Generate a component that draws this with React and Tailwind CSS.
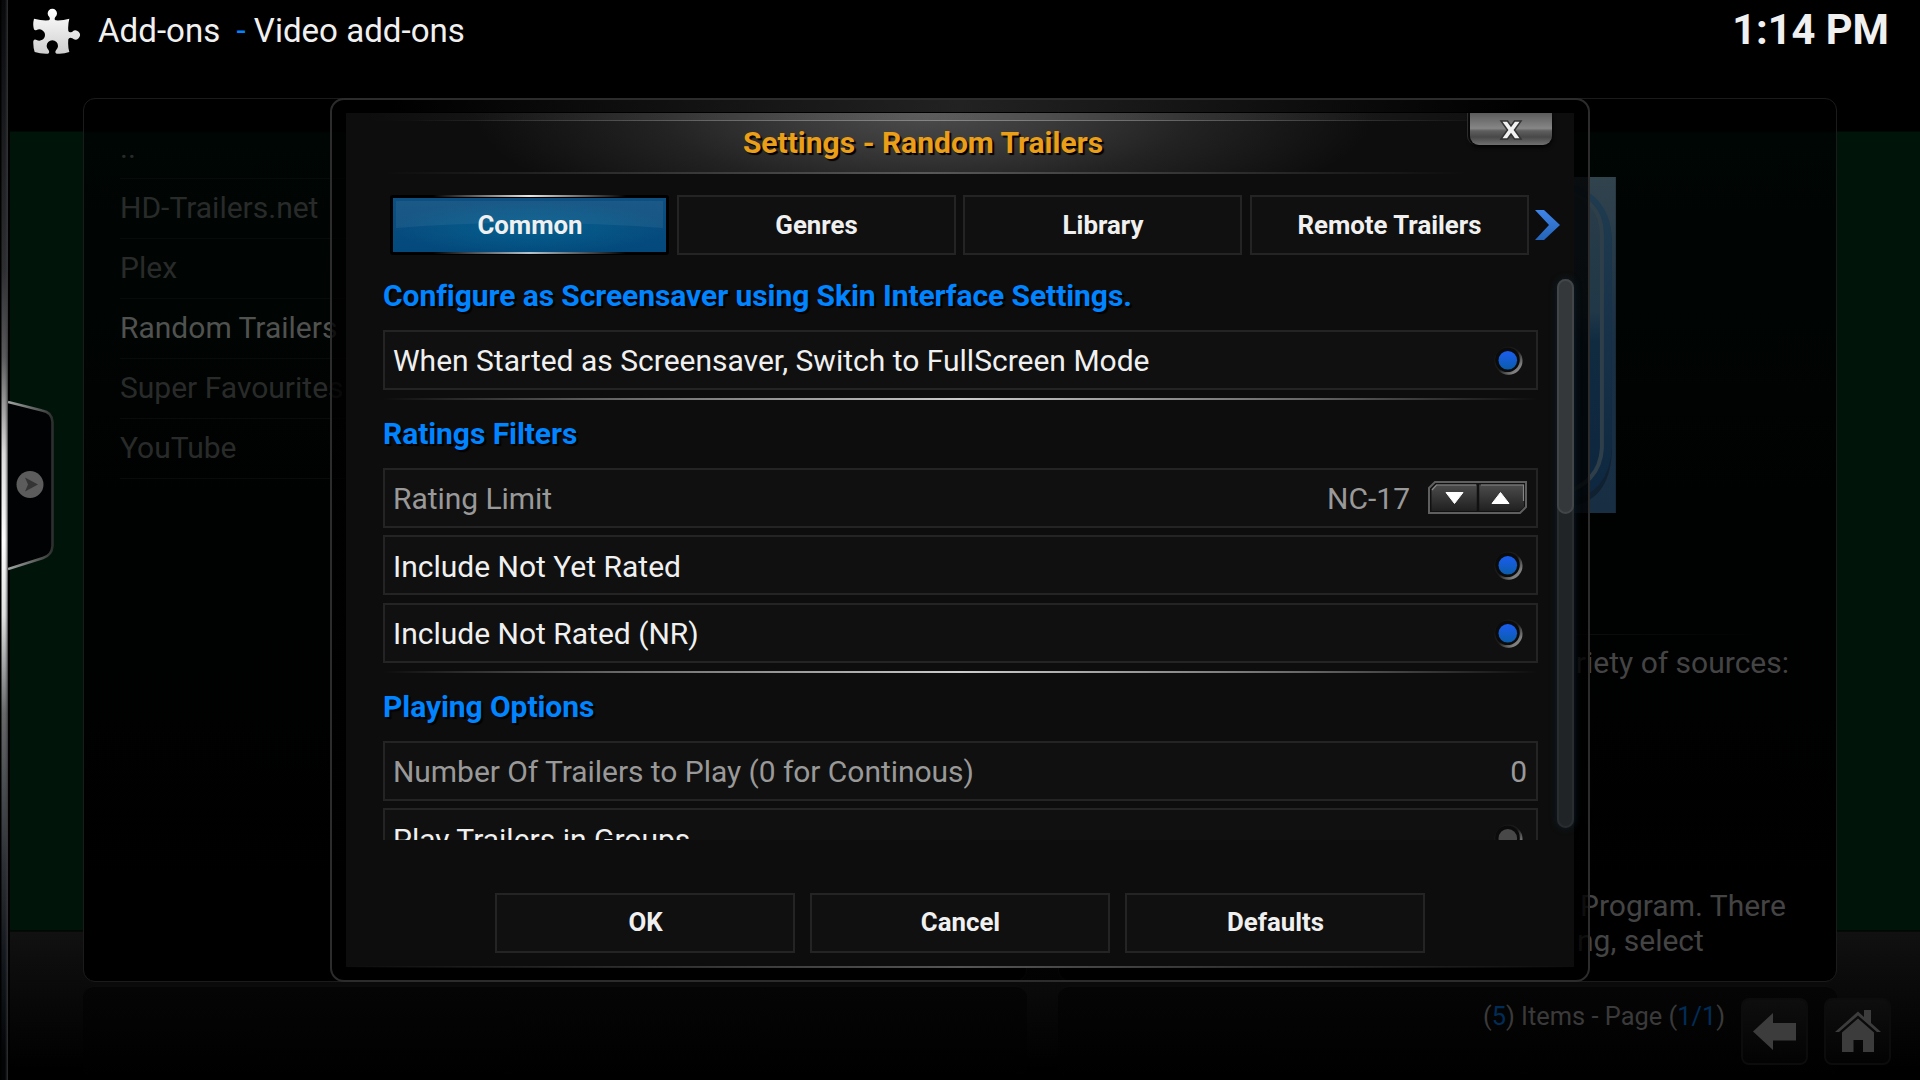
import React from "react";

const addons = ["..", "HD-Trailers.net", "Plex", "Random Trailers", "Super Favourites", "YouTube"];

function PuzzleIcon() {
  return (
    <svg className="h-[48px] w-[50px]" viewBox="96 20 150 144">
      <defs>
        <linearGradient id="puzzle" x1="0" y1="0" x2="0" y2="1">
          <stop offset="0" stopColor="#ffffff" />
          <stop offset="1" stopColor="#cfcfcf" />
        </linearGradient>
      </defs>
      <path
        fill="url(#puzzle)"
        d="M102 55Q128 62 146 60Q152 58 148 50A14 14 0 1 1 166 50Q161 58 168 60Q188 61 208 55Q203 75 205 92Q208 99 217 94A13.500 13.500 0 1 1 217 114Q208 109 205 117Q203 140 208 155Q190 162 170 160Q163 157 168 150A17 17 0 1 0 146 150Q150 157 144 160Q122 161 104 155Q99 140 100 122Q103 115 110 119A17 17 0 1 0 110 89Q102 92 101 84Q98 70 102 55Z"
      />
    </svg>
  );
}

function SideHandle() {
  return (
    <div className="absolute left-0 top-0 flex h-[1080px] items-start">
      <div className="h-full w-[8px] bg-[linear-gradient(90deg,#000_0px,#000_1px,transparent_2px,transparent_5px,rgba(60,60,60,0.5)_7px,#333_8px),linear-gradient(180deg,#08090b_0%,#1b1d21_14%,#2c2e31_25%,#5a5a5c_33%,#dcdcdc_42%,#ffffff_50%,#e0e0e0_57%,#66686a_66%,#2c3035_80%,#15191e_88%,#020406_98%)]" />
      <div className="h-full w-[2px] bg-black" />
      <svg className="-ml-[2px] mt-[398px] h-[176px] w-[50px]" viewBox="8 398 50 176">
        <defs>
          <linearGradient id="edge" x1="0" y1="0" x2="1" y2="0">
            <stop offset="0" stopColor="#a0a4a2" />
            <stop offset="0.8" stopColor="#4a4c4b" />
            <stop offset="1" stopColor="#2e302f" />
          </linearGradient>
        </defs>
        <path d="M8 402L42 410.500Q52 412 52.500 422V546Q52 555 43 558L8 569Z" fill="#010203" />
        <path d="M8 402L42 410.500Q52 412 52.500 422V546Q52 555 43 558L8 569" fill="none" stroke="url(#edge)" strokeWidth="2.500" />
        <circle cx="30" cy="484.500" r="13.500" fill="#5c5c5c" />
        <path d="M25 477.500L38 484.500L25 491.500L28 484.500Z" fill="#343434" />
      </svg>
    </div>
  );
}

function Radio({ on }) {
  return (
    <svg className="mr-[3px] h-[32px] w-[32px]" viewBox="0 0 32 32">
      <defs>
        <linearGradient id="dotOn" x1="0" y1="0" x2="0" y2="1">
          <stop offset="0" stopColor="#1b5df0" />
          <stop offset="1" stopColor="#0a5caa" />
        </linearGradient>
        <linearGradient id="ring" x1="0.1" y1="0.1" x2="0.9" y2="0.9">
          <stop offset="0" stopColor="#1a1a1a" />
          <stop offset="0.5" stopColor="#1c1c1c" />
          <stop offset="0.85" stopColor="#7c7c7c" />
          <stop offset="1" stopColor="#8a8a8a" />
        </linearGradient>
      </defs>
      <circle cx="16.500" cy="16.800" r="14" fill="url(#ring)" />
      <circle cx="15.500" cy="15.800" r="12.300" fill="#0b0b0b" />
      <circle cx="15.800" cy="16.300" r="9.300" fill={on ? "url(#dotOn)" : "#484848"} />
    </svg>
  );
}

function Spinner() {
  return (
    <svg className="h-[33px] w-[99px]" viewBox="0 0 99 33">
      <defs>
        <linearGradient id="spin" x1="0" y1="0" x2="0" y2="1">
          <stop offset="0" stopColor="#4c4c4c" />
          <stop offset="1" stopColor="#202020" />
        </linearGradient>
      </defs>
      <path d="M7 1H98V26L92 32H1V7Z" fill="#111" stroke="#5f5f5f" strokeWidth="2" />
      <path d="M8 3.500H96V26L91 30H3.500V8Z" fill="url(#spin)" />
      <path d="M4 9L8.500 4H48M53 4H95.500V20" fill="none" stroke="#858585" strokeWidth="1.200" />
      <path d="M50 2V31" stroke="#111" strokeWidth="2.500" />
      <path d="M18 11.500H35L26.500 22.500Z" fill="#fff" stroke="#fff" strokeLinejoin="round" />
      <path d="M64 22.500H81L72.500 11.500Z" fill="#fff" stroke="#fff" strokeLinejoin="round" />
    </svg>
  );
}

function Row({ label, dim, children }) {
  return (
    <div className="mb-[7.5px] flex h-[60px] shrink-0 items-center justify-between border-2 border-[#242424] bg-[#101010] pl-[8px] pr-[9px]">
      <span className={dim ? "pt-[2px] tracking-[-0.05px] text-[#999999]" : "pt-[2px] text-[#f0f0f0]"}>{label}</span>
      {children}
    </div>
  );
}

function Heading({ children }) {
  return (
    <h2 className="flex h-[67.5px] shrink-0 items-center text-[30px] font-bold tracking-[-0.07px] text-[#0084ff] [text-shadow:2px_2px_1px_#000]">
      {children}
    </h2>
  );
}

function Separator() {
  return (
    <div className="mt-[1px] h-[2px] shrink-0 bg-[linear-gradient(90deg,transparent,#666_20%,#ccc_50%,#666_80%,transparent)]" />
  );
}

function Tab({ active, children }) {
  if (active) {
    return (
      <div className="relative flex h-[60px] w-[279px] items-center justify-center rounded-[3px] border-3 border-black bg-[linear-gradient(180deg,#0d4f80,#03497c)]">
        <svg className="absolute inset-0 h-[54px] w-[273px]" viewBox="0 0 273 54">
          <defs>
            <radialGradient id="tabGlow" cx="0.5" cy="0.55" r="0.5">
              <stop offset="0" stopColor="#046290" stopOpacity="0.9" />
              <stop offset="1" stopColor="#046290" stopOpacity="0" />
            </radialGradient>
          </defs>
          <rect width="273" height="54" fill="url(#tabGlow)" />
          <path d="M3 3H270V30Q136 20 3 30Z" fill="#fff" fillOpacity="0.06" />
        </svg>
        <div className="absolute -top-[3px] left-[40px] right-[40px] h-[2px] bg-[linear-gradient(90deg,transparent,#e8e8e8_50%,transparent)]" />
        <div className="absolute -bottom-[2px] left-[40px] right-[40px] h-[2px] bg-[linear-gradient(90deg,transparent,#b8c4cc_50%,transparent)]" />
        <span className="relative pl-px">{children}</span>
      </div>
    );
  }
  return (
    <div className="flex h-[60px] w-[279px] items-center justify-center border-2 border-[#242424] bg-[#101010] pl-px">{children}</div>
  );
}

function Dialog() {
  return (
    <div className="absolute left-[330px] top-[98px] h-[884px] w-[1260px] rounded-[14px] border-2 border-[#2c2c2c] bg-[linear-gradient(rgba(0,0,0,0.8),rgba(0,0,0,0.8))] p-[14px] pb-[13px] pt-[13px]">
      <div className="absolute left-[60px] right-[60px] top-0 h-[12px] bg-[linear-gradient(90deg,transparent,#222_50%,transparent)]" />
      <div className="relative flex h-full flex-col bg-[#0d0d0d] pl-[37px]">
        <div className="absolute left-0 right-0 top-0 h-[59px] bg-[radial-gradient(ellipse_450px_125px_at_578px_0px,#4c4c4c,#3a3a3a_28%,#222_60%,transparent)]" />
        <div className="absolute left-[20px] right-[50px] top-0 h-[8px] bg-[linear-gradient(90deg,transparent,rgba(130,130,130,0.32)_50%,transparent)]" />
        <div className="absolute left-[60px] right-[90px] top-[7px] h-[1px] bg-[linear-gradient(90deg,transparent,#858585_50%,transparent)]" />
        <div className="absolute left-[37px] right-[106px] top-[59px] h-[2px] bg-[linear-gradient(90deg,transparent,#585858_50%,transparent)]" />
        <div className="absolute -bottom-[1px] left-0 right-0 h-[2px] bg-[linear-gradient(90deg,transparent,#555_50%,transparent)]" />

        <h1 className="relative flex h-[60px] w-[1080px] items-center justify-center pb-[2px] text-[30px] font-bold text-[#eb9e17] [text-shadow:2px_2px_1px_#000]">
          Settings - Random Trailers
        </h1>
        <button className="absolute right-[22px] top-0 flex h-[32px] w-[82px] items-center justify-center rounded-b-[9px] bg-[linear-gradient(180deg,#5c5c5c_0%,#868686_48%,#5e5e5e_56%,#484848_75%,#707070_100%)] pt-px shadow-[0_2px_4px_#000,-2px_0_0_#0d0d0d,-3px_0_0_#333]">
          <svg className="h-[22px] w-[24px]" viewBox="0 0 24 22">
            <path d="M2 2H8.500L12 7L15.500 2H22L15.500 11L22 20H15.500L12 15L8.500 20H2L8.500 11Z" fill="#f2f2f2" stroke="#333" strokeWidth="1.500" />
          </svg>
        </button>

        <div className="mt-[22px] flex items-center gap-[7.5px] pl-[7px] text-[25.8px] font-bold text-[#f0f0f0]">
          <Tab active>Common</Tab>
          <Tab>Genres</Tab>
          <Tab>Library</Tab>
          <Tab>Remote Trailers</Tab>
          <svg className="-ml-[1px] h-[30px] w-[25px]" viewBox="0 0 25 30">
            <defs>
              <linearGradient id="chev" x1="0" y1="0" x2="0" y2="1">
                <stop offset="0" stopColor="#3f84e8" />
                <stop offset="1" stopColor="#2565b8" />
              </linearGradient>
            </defs>
            <path d="M0 0H9L25 15L9 30H0L14 15Z" fill="url(#chev)" />
          </svg>
        </div>

        <div className="mt-[7px] flex h-[578px]">
          <div className="flex w-[1155px] flex-col overflow-hidden text-[30px]">
            <Heading>Configure as Screensaver using Skin Interface Settings.</Heading>
            <Row label="When Started as Screensaver, Switch to FullScreen Mode"><Radio on /></Row>
            <Separator />
            <Heading>Ratings Filters</Heading>
            <Row label="Rating Limit" dim>
              <div className="flex items-center gap-[18px] text-[#999999]">
                <span className="pt-[2px]">NC-17</span>
                <Spinner />
              </div>
            </Row>
            <Row label="Include Not Yet Rated"><Radio on /></Row>
            <Row label="Include Not Rated (NR)"><Radio on /></Row>
            <Separator />
            <Heading>Playing Options</Heading>
            <Row label="Number Of Trailers to Play (0 for Continous)" dim>
              <span className="pt-[2px] text-[#999999]">0</span>
            </Row>
            <Row label="Play Trailers in Groups"><Radio /></Row>
          </div>
          <div className="ml-[19px] mt-[17px] h-[549px] w-[17px] rounded-full border-2 border-[#292d2f] bg-[#202426] shadow-[0_0_7px_#10202c]">
            <div className="-ml-[2px] -mt-[2px] h-[235px] w-[17px] rounded-full border-2 border-[#434648] bg-[#35383a]" />
          </div>
        </div>

        <div className="-ml-[37px] mt-[53px] flex justify-center gap-[15px] text-[25.8px] font-bold text-[#f0f0f0]">
          {["OK", "Cancel", "Defaults"].map((name) => (
            <button key={name} className="flex h-[60px] w-[300px] items-center justify-center border-2 border-[#242424] bg-[#101010] pb-[2px] pl-px">
              {name}
            </button>
          ))}
        </div>
      </div>
    </div>
  );
}

export default function App() {
  return (
    <div className="relative flex h-[1080px] w-[1920px] flex-col overflow-hidden bg-[linear-gradient(180deg,#000_0px,#000_131px,#00140a_132px,#00140a_930px,#000_931px,#111_932px,#0d0d0d_960px,#000_1070px)] font-['Roboto',sans-serif]">
      <header className="flex h-[98px] items-start justify-between pl-[32px] pr-[31px] text-[#f0f0f0]">
        <div className="flex items-center pt-[7px]">
          <PuzzleIcon />
          <span className="ml-[16px] whitespace-pre text-[33.1px] leading-[48px]">
            Add-ons <span className="ml-[8px] text-[#0084ff]">-</span> Video add-ons
          </span>
        </div>
        <div className="pt-[1px] text-[41.6px] font-bold leading-[58px]">1:14 PM</div>
      </header>

      <main className="ml-[83px] flex h-[884px] shrink-0 gap-[31px]">
        <section className="w-[944px] rounded-[12px] border border-[#1a1c1b] bg-[linear-gradient(180deg,#000_0px,#000_32px,#000604_34px,#000301_300px,#000201_400px,#000_800px)] pl-[36px] pt-[20px]">
          {addons.map((name) => (
            <div
              key={name}
              className={
                name === "Random Trailers"
                  ? "flex h-[60px] items-center border-b border-[#080c09] pb-[2px] text-[30px] text-[#505250]"
                  : "flex h-[60px] items-center border-b border-[#080c09] pb-[2px] text-[30px] text-[#292b2a]"
              }
            >
              {name}
            </div>
          ))}
        </section>
        <section className="flex w-[779px] flex-col items-end rounded-[12px] border border-[#1a1c1b] bg-[linear-gradient(180deg,#000_0px,#000_32px,#000604_34px,#000301_300px,#000201_400px,#000_800px)] pt-[78px] text-[30px] text-[#444444]">
          <svg className="mr-[220px] h-[336px] w-[100px]" viewBox="0 0 100 337">
            <defs>
              <linearGradient id="art" x1="0" y1="0" x2="0" y2="1">
                <stop offset="0" stopColor="#31434d" />
                <stop offset="0.5" stopColor="#1a3044" />
                <stop offset="1" stopColor="#182e42" />
              </linearGradient>
              <linearGradient id="artFrame" x1="0" y1="0" x2="0" y2="1">
                <stop offset="0" stopColor="#203c50" />
                <stop offset="1" stopColor="#0e2740" />
              </linearGradient>
              <linearGradient id="artFace" x1="0" y1="0" x2="0" y2="1">
                <stop offset="0" stopColor="#2a3c48" />
                <stop offset="0.4" stopColor="#203848" />
                <stop offset="0.5" stopColor="#102a40" />
                <stop offset="1" stopColor="#0e2740" />
              </linearGradient>
            </defs>
            <rect width="100" height="337" fill="url(#art)" />
            <path d="M0 4H40Q96 14 96 64V272Q94 324 50 328H0Z" fill="#081421" fillOpacity="0.5" transform="translate(0 3)" />
            <path d="M0 2H40Q96 14 96 64V270Q94 318 50 326H0Z" fill="url(#artFrame)" />
            <path d="M0 12H40Q86 20 86 58V272Q84 308 44 318H0Z" fill="url(#artFace)" stroke="#2f3f49" strokeWidth="4" />
          </svg>
          <div className="mt-[121px] h-[1px] w-full bg-[linear-gradient(90deg,#111_60%,transparent_90%)]" />
          <p className="mt-[10px] pr-[47px] leading-[35px]">riety of sources:</p>
          <div className="mr-[49px] mt-[209px] w-[207px] leading-[34.7px]">
            <p className="whitespace-nowrap">Program. There</p>
            <p className="-ml-[3px] whitespace-nowrap">ng, select</p>
          </div>
        </section>
      </main>

      <footer className="ml-[83px] mt-[3px] flex h-[95px] gap-[31px]">
        <div className="w-[944px] rounded-t-[12px] border-t-2 border-[#0b0b0b] bg-[linear-gradient(180deg,#050505,#000)]" />
        <div className="flex w-[779px] items-start rounded-t-[12px] border-t-2 border-[#0b0b0b] bg-[linear-gradient(180deg,#050505,#000)] pl-[425px] pt-[11px]">
          <p className="w-[257px] shrink-0 whitespace-nowrap pt-[1px] text-[25.4px] leading-[34px] text-[#3a3a3a]">
            (<span className="text-[#002d58]">5</span>) Items - Page (<span className="text-[#002d58]">1/1</span>)
          </p>
          <div className="ml-px flex shrink-0 gap-[16px]">
            <div className="flex h-[67px] w-[67px] items-center justify-center rounded-[8px] border-2 border-[#0c0c0c] bg-[linear-gradient(180deg,#0e0e0e,#030303)]">
              <svg className="h-[37px] w-[43px]" viewBox="0 0 43 37">
                <path d="M0 18.500L20 0V10H43V27.500H20V37Z" fill="#3c3c3c" />
              </svg>
            </div>
            <div className="flex h-[67px] w-[67px] items-center justify-center rounded-[8px] border-2 border-[#0c0c0c] bg-[linear-gradient(180deg,#0e0e0e,#030303)]">
              <svg className="h-[43px] w-[46px]" viewBox="0 0 46 43">
                <path d="M0 22L23 1.500L29 7V0H36V13L46 22H42L23 5.500L4 22Z" fill="#3c3c3c" />
                <path d="M7 22.500L23 8.500L39 22.500V42H28V30H18.500V42H7Z" fill="#3c3c3c" />
              </svg>
            </div>
          </div>
        </div>
      </footer>

      <SideHandle />
      <Dialog />
    </div>
  );
}
